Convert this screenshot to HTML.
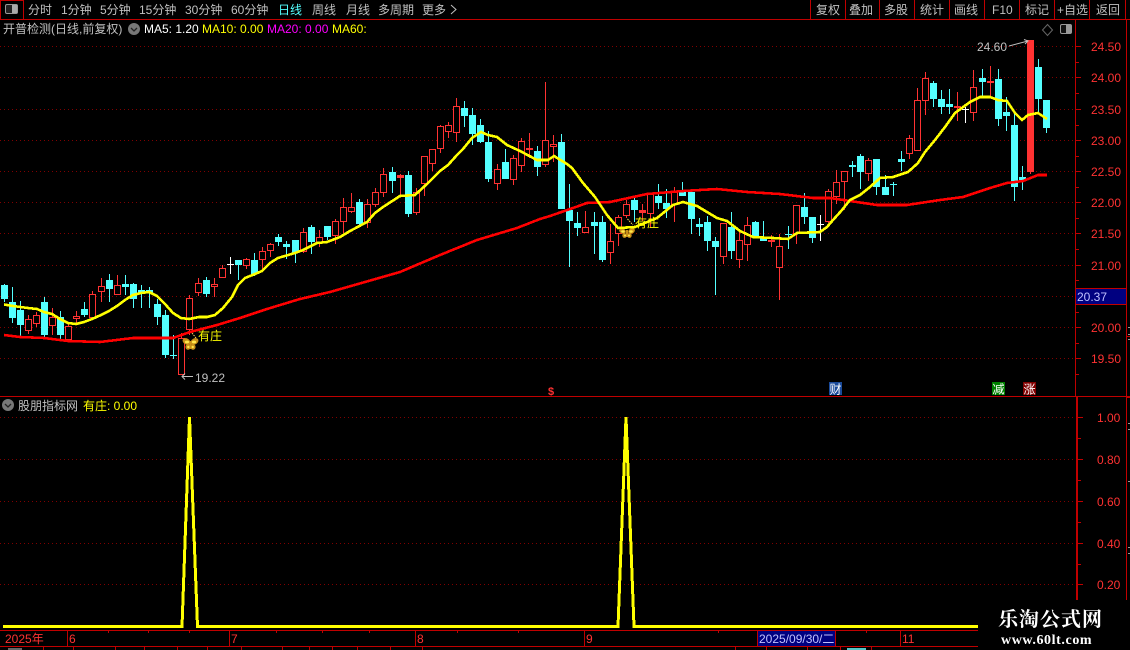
<!DOCTYPE html>
<html lang="zh"><head><meta charset="utf-8"><title>K线</title>
<style>
html,body{margin:0;padding:0;background:#000;width:1130px;height:650px;overflow:hidden}
svg{display:block}
text{font-family:"Liberation Sans","Noto Sans CJK SC",sans-serif;font-size:12px;fill:#c0c0c0}
.y{fill:#ffff00}.p{fill:#ff3232}.m{fill:#ff00ff}.w{fill:#fff}
.c{shape-rendering:crispEdges}
</style></head><body>
<svg width="1130" height="650" viewBox="0 0 1130 650" xmlns="http://www.w3.org/2000/svg">
<rect width="1130" height="650" fill="#000"/>

<!-- grid -->
<path class="c" fill="none" stroke="#800000" stroke-dasharray="1 3" d="M0 46.5H1075M0 77.5H1075M0 109.5H1075M0 140.5H1075M0 171.5H1075M0 202.5H1075M0 233.5H1075M0 265.5H1075M0 296.5H1075M0 327.5H1075M0 358.5H1075M0 417.5H1075M0 459.5H1075M0 501.5H1075M0 543.5H1075M0 584.5H1075"/>

<!-- frame lines -->
<path class="c" fill="none" stroke="#c00000" d="M0 19.5H1130M0.5 0V19M23.5 0V19M0 0.5H23M810.5 0V19M845.5 0V19M879.5 0V19M914.5 0V19M949.5 0V19M984.5 0V19M1019.5 0V19M1054.5 0V19M1089.5 0V19M1125.5 0V19
M0 396.5H1130M1075.5 19V396M1126.5 19V600
M1076 46.5h5M1076 62.5h3M1076 77.5h5M1076 93.5h3M1076 109.5h5M1076 125.5h3M1076 140.5h5M1076 156.5h3M1076 171.5h5M1076 187.5h3M1076 202.5h5M1076 218.5h3M1076 233.5h5M1076 249.5h3M1076 265.5h5M1076 280.5h3M1076 312.5h3M1076 327.5h5M1076 343.5h3M1076 358.5h5M1076 374.5h3
M1078 417.5h5M1078 438.5h3M1078 459.5h5M1078 480.5h3M1078 501.5h5M1078 522.5h3M1078 543.5h5M1078 564.5h3M1078 584.5h5
M1127 336.5h3M1127 397.5h3
M0 630.5H978M0 646.5H978M67.5 630V646M229.5 630V646M415.5 630V646M584.5 630V646M757.5 630V646M835.5 630V646M900.5 630V646
M108.5 631v2M148.5 631v2M189.5 631v2M276.5 631v2M322.5 631v2M369.5 631v2M457.5 631v2M518.5 631v2M718.5 631v2M866.5 631v2
M43.5 647v3M73.5 647v3M115.5 647v3M144.5 647v3M177.5 647v3M207.5 647v3M241.5 647v3M282.5 647v3M309.5 647v3M332.5 647v3M357.5 647v3M390.5 647v3M422.5 647v3M735.5 647v3M766.5 647v3M807.5 647v3M840.5 647v3M871.5 647v3"/>
<rect class="c" x="1076" y="397" width="2" height="203" fill="#c00000"/>
<path class="c" fill="none" stroke="#999" d="M1128 327.5h2M1128 334.5h2M1128 339.5h2M1128 423.5h2M1128 429.5h2M1128 481.5h2M1128 547.5h2M1128 553.5h2"/>

<!-- wicks -->
<path class="c" fill="none" stroke="#ff3232" d="M28.5 315V334M36.5 312V327M52.5 308V335M68.5 323V340M76.5 311V325M92.5 291V319M101.5 278V302M117.5 275V295M181.5 333V375M189.5 295V335M198.5 278V296M214.5 278V297M222.5 265V278M246.5 258V269M262.5 247V270M270.5 243V257M303.5 228V253M319.5 230V247M335.5 219V244M343.5 198V233M351.5 193V213M367.5 199V228M375.5 188V207M383.5 168V197M400.5 174V197M416.5 188V215M424.5 156V196M432.5 149V171M440.5 125V153M448.5 122V138M456.5 98V142M497.5 164V190M513.5 155V185M521.5 138V172M529.5 133V158M545.5 82V167M553.5 135V162M585.5 211V233M610.5 224V264M618.5 215V246M626.5 200V218M642.5 204V221M650.5 193V228M674.5 187V222M723.5 223V264M739.5 230V268M747.5 217V261M771.5 235V247M779.5 234V300M796.5 205V244M828.5 189V223M836.5 170V204M844.5 171V210M868.5 158V181M909.5 135V159M917.5 88V151M925.5 72V115M957.5 92V121M973.5 70V121M990.5 66V97M1030.5 40V174"/>
<path class="c" fill="none" stroke="#54ffff" d="M4.5 284V302M12.5 287V323M20.5 301V338M44.5 297V338M60.5 311V339M84.5 302V317M109.5 274V302M125.5 275V295M133.5 283V308M141.5 285V308M149.5 287V308M157.5 299V325M165.5 310V358M173.5 335V359M170 355.5h7M206.5 277V297M238.5 260V280M254.5 253V276M278.5 234V246M286.5 241V259M295.5 240V263M311.5 225V254M327.5 226V240M359.5 199V227M392.5 167V193M408.5 171V217M464.5 101V127M472.5 108V145M480.5 119V143M488.5 131V182M505.5 149V179M537.5 146V176M561.5 134V209M569.5 184V267M577.5 212V236M594.5 212V254M602.5 216V262M634.5 196V222M658.5 184V209M666.5 189V218M682.5 182V196M691.5 192V234M699.5 218V236M707.5 216V251M715.5 237V295M731.5 212V259M755.5 221V238M763.5 221V241M788.5 226V249M785 234.5h7M804.5 193V224M812.5 217V243M852.5 161V177M860.5 154V189M876.5 159V195M885.5 175V195M893.5 182V196M890 184.5h7M901.5 151V171M933.5 81V107M941.5 90V114M949.5 89V114M982.5 69V97M998.5 69V126M1006.5 97V131M1014.5 113V201M1022.5 166V190M1038.5 59V113M1046.5 100V133"/>
<path class="c" fill="none" stroke="#ffffff" d="M230.5 257V274M227 264.5h7M820.5 215V241M817 224.5h7M965.5 107V123M962 109.5h7"/>

<!-- cyan bodies -->
<path class="c" fill="#54ffff" d="M1 285h7v14h-7zM9 302h7v16h-7zM17 310h7v15h-7zM41 302h7v33h-7zM57 317h7v18h-7zM81 309h7v6h-7zM106 280h7v9h-7zM122 284h7v3h-7zM130 284h7v15h-7zM138 290h7v4h-7zM146 290h7v3h-7zM154 304h7v13h-7zM162 315h7v40h-7zM203 280h7v14h-7zM235 260h7v5h-7zM251 260h7v14h-7zM275 237h7v5h-7zM283 244h7v3h-7zM292 240h7v13h-7zM308 227h7v15h-7zM324 226h7v11h-7zM356 202h7v22h-7zM389 172h7v9h-7zM405 175h7v39h-7zM461 108h7v8h-7zM469 115h7v19h-7zM477 125h7v17h-7zM485 142h7v37h-7zM502 162h7v17h-7zM534 151h7v16h-7zM558 142h7v67h-7zM566 210h7v11h-7zM574 223h7v5h-7zM591 222h7v4h-7zM599 222h7v38h-7zM631 200h7v10h-7zM655 196h7v7h-7zM663 203h7v6h-7zM679 192h7v4h-7zM688 192h7v27h-7zM696 224h7v3h-7zM704 222h7v19h-7zM712 241h7v6h-7zM728 227h7v24h-7zM752 222h7v15h-7zM760 238h7v3h-7zM801 207h7v10h-7zM809 217h7v21h-7zM849 165h7v2h-7zM857 156h7v16h-7zM873 159h7v28h-7zM882 187h7v8h-7zM898 159h7v3h-7zM930 83h7v16h-7zM938 99h7v8h-7zM946 104h7v3h-7zM979 78h7v4h-7zM995 79h7v40h-7zM1003 112h7v4h-7zM1011 125h7v62h-7zM1019 177h7v3h-7zM1035 67h7v32h-7zM1043 100h7v28h-7z"/>

<!-- red bodies -->
<path class="c" fill="#000" stroke="#ff3232" d="M25.5 319.5h6v11h-6zM33.5 315.5h6v8h-6zM49.5 317.5h6v8h-6zM65.5 326.5h6v13h-6zM73.5 316.5h6v2h-6zM89.5 294.5h6v23h-6zM98.5 286.5h6v5h-6zM114.5 285.5h6v9h-6zM178.5 338.5h6v36h-6zM186.5 298.5h6v31h-6zM195.5 283.5h6v9h-6zM211.5 284.5h6v2h-6zM219.5 268.5h6v9h-6zM243.5 259.5h6v6h-6zM259.5 251.5h6v8h-6zM267.5 244.5h6v6h-6zM300.5 232.5h6v19h-6zM316.5 237.5h6v5h-6zM332.5 221.5h6v14h-6zM340.5 207.5h6v14h-6zM348.5 207.5h6v4h-6zM364.5 204.5h6v18h-6zM372.5 192.5h6v12h-6zM380.5 174.5h6v18h-6zM413.5 192.5h6v20h-6zM421.5 156.5h6v27h-6zM429.5 149.5h6v14h-6zM437.5 126.5h6v22h-6zM445.5 125.5h6v6h-6zM453.5 106.5h6v26h-6zM494.5 169.5h6v14h-6zM510.5 158.5h6v21h-6zM518.5 141.5h6v24h-6zM542.5 140.5h6v24h-6zM550.5 144.5h6v2h-6zM582.5 227.5h6v5h-6zM607.5 241.5h6v11h-6zM615.5 217.5h6v16h-6zM623.5 204.5h6v11h-6zM647.5 193.5h6v20h-6zM671.5 192.5h6v12h-6zM720.5 223.5h6v33h-6zM736.5 240.5h6v19h-6zM744.5 225.5h6v19h-6zM776.5 246.5h6v21h-6zM793.5 205.5h6v28h-6zM825.5 191.5h6v30h-6zM833.5 182.5h6v14h-6zM841.5 171.5h6v10h-6zM865.5 160.5h6v13h-6zM906.5 138.5h6v15h-6zM914.5 100.5h6v50h-6zM922.5 78.5h6v22h-6zM970.5 87.5h6v25h-6z"/>
<path class="c" fill="#ff3232" d="M397 175h7v3h-7zM526 148h7v2h-7zM639 210h7v3h-7zM768 240h7v2h-7zM954 106h7v2h-7zM987 81h7v2h-7zM1027 40h7v132h-7z"/>

<!-- second butterfly, under the MA line -->
<g fill="#c89018">
<ellipse cx="622.5" cy="231" rx="3.6" ry="2.6" transform="rotate(30 622.5 231)"/>
<ellipse cx="631.5" cy="231" rx="3.6" ry="2.6" transform="rotate(-30 631.5 231)"/>
<ellipse cx="624.5" cy="235.5" rx="2.2" ry="2.4"/>
<ellipse cx="629.5" cy="235.5" rx="2.2" ry="2.4"/>
<rect x="626" y="230" width="2" height="7"/>
</g>
<g fill="#ffe84a">
<ellipse cx="623" cy="231.5" rx="1.8" ry="1.2"/>
<ellipse cx="631" cy="231.5" rx="1.8" ry="1.2"/>
<circle cx="625" cy="235.5" r="1"/>
<circle cx="629" cy="235.5" r="1"/>
</g>

<!-- moving averages -->
<polyline class="c" fill="none" stroke="#ff0000" stroke-width="2.6" points="4,335 20,337 44,338 68,341 100,342 133,338 173,338 190,332 217,325 240,318 267,309 300,299 330,292 400,272 440,255 477,240 517,228 540,219 550,216 573,208 587,203 610,202 647,194 683,191 717,189 747,192 780,194 813,198 830,198 850,201 877,205 907,205 940,200 963,197 990,188 1007,183 1023,181 1038,175 1047,175"/>
<polyline class="c" fill="none" stroke="#ffff00" stroke-width="2.6" points="4,304.5 13,306 28,308 37,309 44,312 52,314 60,319 68,323 76,324 84,322 92,319 101,315 109,311 117,306 125,300 133,295 141,293 149,292 157,296 165,304 173,313 181,318 189,319 199,317 207,317 215,315 223,308 232,297 238,285 245,278 255,274 262,271 270,263 278,258 295,253 303,250 317,243 327,242 340,237 350,231 367,222 375,213 383,207 400,196 415,195 427,184 440,171 448,165 457,155 463,149 472,138 481,132 488,135 497,137 507,145 520,151 537,160 548,160 554,156 567,164 572,168 583,183 595,197 607,215 618,228 635,227 657,218 673,205 683,202 697,206 717,218 727,221 740,231 753,237 773,238 788,239 797,233 820,232 827,227 833,220 842,210 850,200 860,195 870,187 880,178 893,177 908,172 918,163 925,152 935,140 945,127 955,113 970,102 980,97 990,97 998,100 1007,101 1015,113 1022,120 1028,115 1038,113 1047,119"/>

<!-- first butterfly -->
<g fill="#c89018">
<ellipse cx="186.5" cy="341.5" rx="4.2" ry="3" transform="rotate(30 186.5 341.5)"/>
<ellipse cx="194.5" cy="341.5" rx="4.2" ry="3" transform="rotate(-30 194.5 341.5)"/>
<ellipse cx="188" cy="347" rx="2.6" ry="2.8"/>
<ellipse cx="193" cy="347" rx="2.6" ry="2.8"/>
<rect x="189.5" y="341" width="2" height="8"/>
</g>
<g fill="#ffe84a">
<ellipse cx="187" cy="342" rx="2.2" ry="1.4"/>
<ellipse cx="194" cy="342" rx="2.2" ry="1.4"/>
<circle cx="188.3" cy="347" r="1.2"/>
<circle cx="192.7" cy="347" r="1.2"/>
</g>
<path fill="none" stroke="#ffe060" stroke-dasharray="1.5 1" d="M192 333L196 338M627.5 219L633 225"/>
<text x="198" y="340" class="y">有庄</text>
<text x="635" y="227" class="y">有庄</text>

<!-- high/low markers -->
<text x="195" y="382">19.22</text>
<path fill="none" stroke="#c0c0c0" d="M193 376.5H182M185 373.5L182 376.5L185 379.5"/>
<text x="977" y="51">24.60</text>
<path fill="none" stroke="#c0c0c0" d="M1009 46L1028 41M1024 39.5L1028 41L1025 44"/>

<!-- toolbar -->
<rect x="5.5" y="4.5" width="12" height="9" rx="1.5" fill="#222" stroke="#999"/>
<rect x="12" y="5" width="5" height="8" fill="#aaa"/>
<text x="28" y="14">分时</text>
<text x="61" y="14">1分钟</text>
<text x="100" y="14">5分钟</text>
<text x="139" y="14">15分钟</text>
<text x="185" y="14">30分钟</text>
<text x="231" y="14">60分钟</text>
<text x="278" y="14" style="fill:#54ffff">日线</text>
<text x="312" y="14">周线</text>
<text x="346" y="14">月线</text>
<text x="378" y="14">多周期</text>
<text x="422" y="14">更多</text>
<path fill="none" stroke="#c0c0c0" d="M451 5L456 9.5L451 14"/>
<text x="816" y="14">复权</text>
<text x="849" y="14">叠加</text>
<text x="884" y="14">多股</text>
<text x="920" y="14">统计</text>
<text x="954" y="14">画线</text>
<text x="992" y="14">F10</text>
<text x="1025" y="14">标记</text>
<text x="1057" y="14">+自选</text>
<text x="1096" y="14">返回</text>

<!-- header row -->
<text x="3" y="33">开普检测(日线,前复权)</text>
<circle cx="134" cy="29" r="6" fill="#777"/>
<path fill="none" stroke="#222" stroke-width="1.3" d="M131 28L134 31L137 28"/>
<text x="144" y="33" class="w">MA5: 1.20</text>
<text x="202" y="33" class="y">MA10: 0.00</text>
<text x="267" y="33" class="m">MA20: 0.00</text>
<text x="332" y="33" class="y">MA60:</text>
<path fill="none" stroke="#666" d="M1047.5 24.5L1052.5 30L1047.5 35.5L1042.5 30Z"/>
<rect x="1060.5" y="24.5" width="11" height="9" rx="1.5" fill="#111" stroke="#999"/>
<rect x="1066" y="25" width="5" height="8" fill="#999"/>

<!-- price axis labels -->
<text x="1091" y="51" class="p">24.50</text>
<text x="1091" y="82" class="p">24.00</text>
<text x="1091" y="114" class="p">23.50</text>
<text x="1091" y="145" class="p">23.00</text>
<text x="1091" y="176" class="p">22.50</text>
<text x="1091" y="207" class="p">22.00</text>
<text x="1091" y="238" class="p">21.50</text>
<text x="1091" y="270" class="p">21.00</text>
<rect class="c" x="1076" y="289" width="50" height="15" fill="#000080"/>
<path class="c" fill="none" stroke="#c00000" d="M1076 288.5h50M1076 304.5h50"/>
<text x="1077" y="301" style="fill:#c0c0ff">20.37</text>
<text x="1091" y="332" class="p">20.00</text>
<text x="1091" y="363" class="p">19.50</text>

<!-- event markers -->
<text x="548" y="395" class="p" style="font-size:11px;font-weight:bold">$</text>
<rect class="c" x="829" y="382" width="13" height="13" fill="#1a4a9a"/>
<text x="829.5" y="393.5" class="w">财</text>
<rect class="c" x="992" y="382" width="13" height="13" fill="#008000"/>
<text x="992.5" y="393.5" class="w">减</text>
<rect class="c" x="1023" y="382" width="13" height="13" fill="#800000"/>
<text x="1023.5" y="393.5" class="w">涨</text>

<!-- indicator pane -->
<circle cx="8" cy="405" r="6" fill="#777"/>
<path fill="none" stroke="#222" stroke-width="1.3" d="M5 404L8 407L11 404"/>
<text x="18" y="410">股朋指标网</text>
<text x="83" y="410" class="y">有庄: 0.00</text>
<text x="1097" y="422" class="p">1.00</text>
<text x="1097" y="464" class="p">0.80</text>
<text x="1097" y="506" class="p">0.60</text>
<text x="1097" y="548" class="p">0.40</text>
<text x="1097" y="589" class="p">0.20</text>
<polyline class="c" fill="none" stroke="#ffff00" stroke-width="3" points="3,626.5 182,626.5 189.5,417 197.5,626.5 618,626.5 626,417 634,626.5 978,626.5"/>

<!-- date axis -->
<text x="5" y="643" class="p">2025年</text>
<text x="69" y="643" class="p">6</text>
<text x="231" y="643" class="p">7</text>
<text x="417" y="643" class="p">8</text>
<text x="586" y="643" class="p">9</text>
<rect class="c" x="758" y="631" width="77" height="15" fill="#000080"/>
<text x="759" y="643" style="fill:#c0c0ff">2025/09/30/二</text>
<text x="902" y="643" class="p">11</text>

<!-- status bar slivers -->
<rect class="c" x="8" y="648" width="14" height="2" fill="#666"/>
<rect class="c" x="847" y="648" width="19" height="2" fill="#54c8c8"/>

<!-- watermark -->
<rect class="c" x="978" y="600" width="152" height="50" fill="#000"/>
<text x="998" y="626" style="font-family:'Noto Serif CJK SC','Liberation Serif',serif;font-size:20px;font-weight:bold;fill:#fff;letter-spacing:1px">乐淘公式网</text>
<text x="1001" y="644" style="font-family:'Liberation Serif',serif;font-size:14px;font-weight:bold;fill:#fff;letter-spacing:.6px">www.60lt.com</text>
</svg>
</body></html>
